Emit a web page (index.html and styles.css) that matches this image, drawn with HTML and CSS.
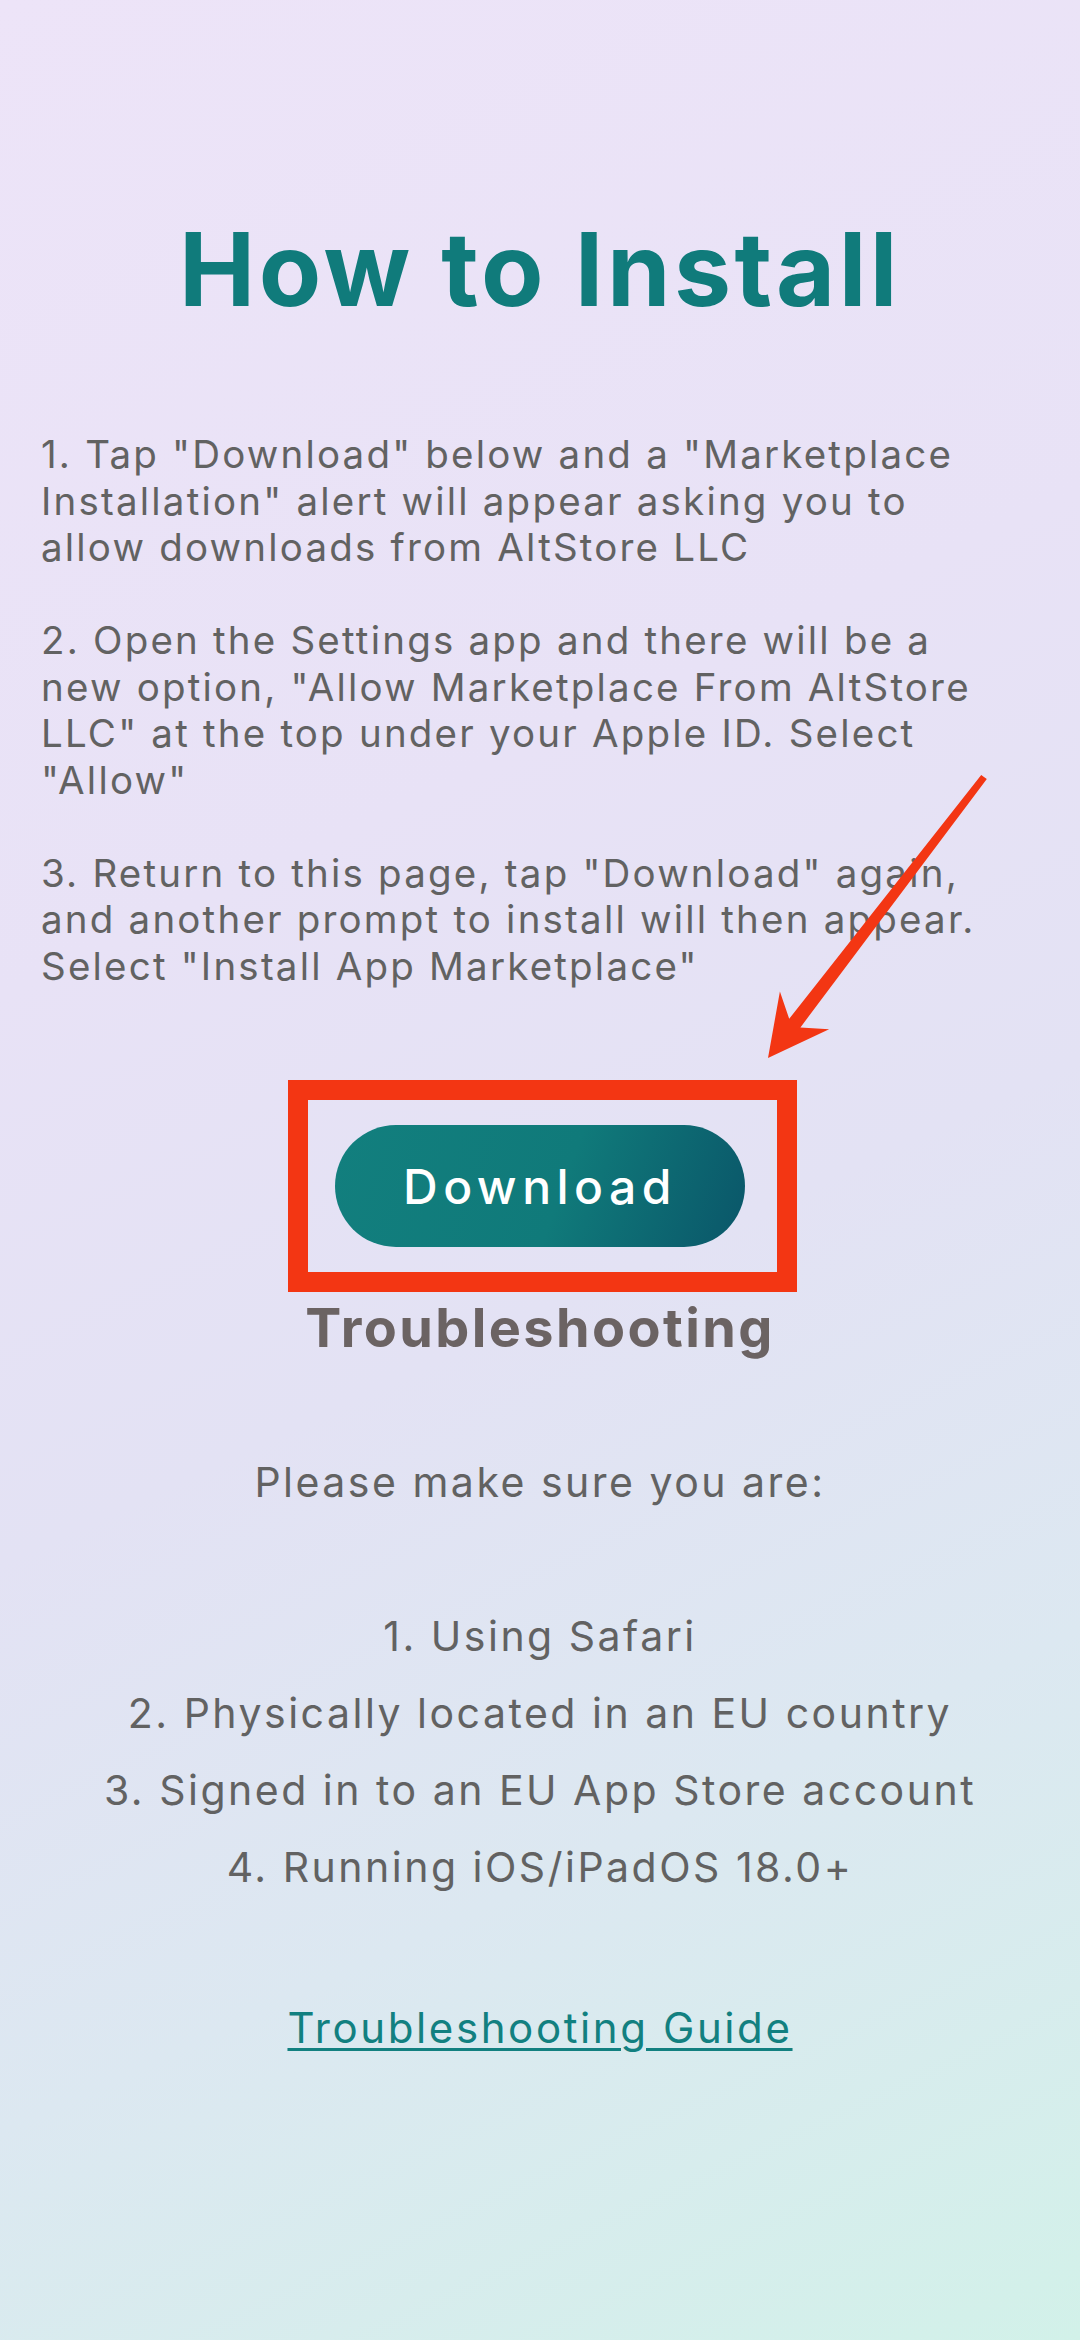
FILE: index.html
```html
<!DOCTYPE html>
<html lang="en">
  <head>
    <meta charset="UTF-8" />
    <meta name="viewport" content="width=device-width, initial-scale=1.0" />
    <title>How to Install</title>
    <link rel="stylesheet" href="styles.css">
  </head>
  <body>
    <div class="page">
      <h1 class="title">How to Install</h1>

      <div class="steps">
        <p>1. Tap "Download" below and a "Marketplace<br>Installation" alert will appear asking you to<br>allow downloads from AltStore LLC</p>
        <p>2. Open the Settings app and there will be a<br>new option, "Allow Marketplace From AltStore<br>LLC" at the top under your Apple ID. Select<br>"Allow"</p>
        <p>3. Return to this page, tap "Download" again,<br>and another prompt to install will then appear.<br>Select "Install App Marketplace"</p>
      </div>

      <div class="download-row">
        <button class="btn-download">Download</button>
      </div>

      <h2 class="trouble-title">Troubleshooting</h2>

      <div class="checklist">
        <p class="intro">Please make sure you are:</p>
        <p>1. Using Safari</p>
        <p>2. Physically located in an EU country</p>
        <p>3. Signed in to an EU App Store account</p>
        <p>4. Running iOS/iPadOS 18.0+</p>
      </div>

      <a class="guide-link" href="#">Troubleshooting Guide</a>

      <!-- red annotation drawn over the screenshot -->
      <svg class="markup" viewBox="0 0 1080 2340" xmlns="http://www.w3.org/2000/svg">
        <rect x="298" y="1090" width="489" height="192" fill="none" stroke="#f33613" stroke-width="20" />
        <polygon fill="#f33613" points="986.8,779.1 800.4,1027.4 829.1,1029.3 768,1058 779.9,991.5 789.2,1018.8 981.2,774.9" />
      </svg>
    </div>
  </body>
</html>
```

FILE: styles.css
```css
html,
body {
  margin: 0;
  padding: 0;
}
body {
  font-family: Inter, "Noto Sans", sans-serif;
  color: #626262;
  background: linear-gradient(155deg, #ede4f8 0%, #e8e2f6 35%, #e3e2f4 55%, #dce8f1 75%, #d2f1e9 100%);
  min-height: 2340px;
}
.page {
  position: relative;
  width: 1080px;
  height: 2340px;
  box-sizing: border-box;
  padding: 207px 41px 0;
  overflow: hidden;
}
.title {
  margin: 0;
  text-align: center;
  font-size: 102px;
  line-height: 124px;
  font-weight: 700;
  color: #107b7b;
  letter-spacing: 3.5px;
}
.steps {
  margin-top: 100px;
  font-size: 38.5px;
  line-height: 46.5px;
  letter-spacing: 2.2px;
}
.steps p {
  margin: 0 0 46.5px;
}
.steps p:last-child {
  margin-bottom: 0;
}
.download-row {
  display: flex;
  justify-content: center;
  margin-top: 136px;
}
.btn-download {
  width: 410px;
  height: 122px;
  border: none;
  border-radius: 61px;
  background: linear-gradient(110deg, #127f7e 0%, #107a7a 55%, #0a5669 100%);
  color: #fff;
  font-family: Inter, "Noto Sans", sans-serif;
  font-size: 48px;
  font-weight: 500;
  letter-spacing: 5.5px;
  cursor: pointer;
}
.trouble-title {
  margin: 48px 0 0;
  text-align: center;
  font-size: 54px;
  line-height: 65px;
  font-weight: 700;
  color: #6b6363;
  letter-spacing: 2.4px;
}
.checklist {
  margin-top: 84px;
  text-align: center;
  font-size: 41px;
  line-height: 77px;
  letter-spacing: 2.5px;
}
.checklist p {
  margin: 0;
}
.checklist .intro {
  margin-bottom: 77px;
}
.guide-link {
  display: block;
  width: max-content;
  margin: 96px auto 0;
  font-size: 42px;
  line-height: 51px;
  letter-spacing: 2.6px;
  color: #128080;
  text-decoration: underline;
  text-decoration-thickness: 3px;
  text-underline-offset: 5px;
}
.markup {
  position: absolute;
  top: 0;
  left: 0;
  width: 1080px;
  height: 2340px;
  pointer-events: none;
}
```
